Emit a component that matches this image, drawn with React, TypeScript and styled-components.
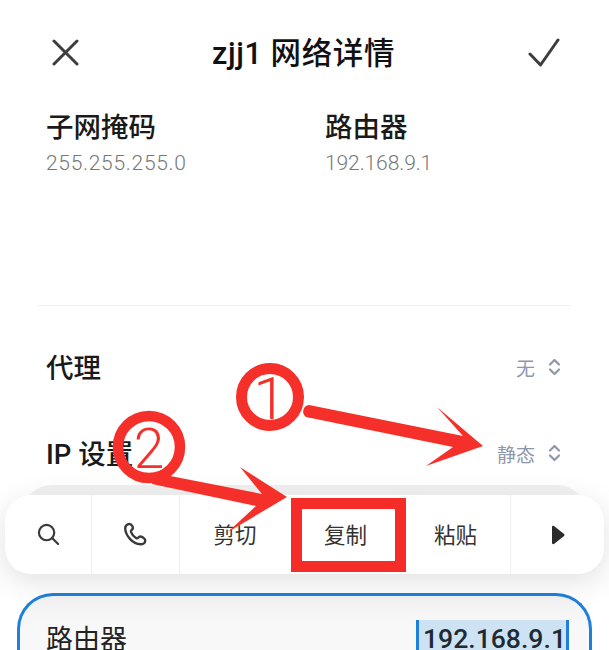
import React from 'react'
import styled, { createGlobalStyle } from 'styled-components'

const Global = createGlobalStyle`
  html, body {
    margin: 0;
    background: #fff;
    font-family: "Roboto", "Noto Sans CJK SC", sans-serif;
  }
`

const Page = styled.div`
  position: relative;
  width: 609px;
  height: 650px;
  overflow: hidden;
  background: #fff;
  display: flex;
  flex-direction: column;
`

const Header = styled.header`
  height: 104px;
  flex: none;
  padding: 0 49px 0 52px;
  display: flex;
  align-items: center;
  justify-content: space-between;
  box-sizing: border-box;
  color: #3d3d3d;
`

const Title = styled.h1`
  margin: -3px 0 0;
  font-size: 30.5px;
  font-weight: 500;
  color: #111;
  letter-spacing: 0.6px;
`

const InfoGrid = styled.div`
  height: 202px;
  flex: none;
  margin: 0 38px;
  padding: 5px 8px 0;
  box-sizing: border-box;
  display: grid;
  grid-template-columns: 279px 1fr;
  align-content: start;
  border-bottom: 1px solid #eeeeee;
`

const Label = styled.div`
  font-size: 27.5px;
  line-height: 38px;
  font-weight: 500;
  color: #1a1a1a;
`

const Value = styled.div<{ $spacing: number }>`
  font-size: 21px;
  line-height: 32px;
  font-weight: 300;
  color: #777;
  letter-spacing: ${p => p.$spacing}px;
`

const Rows = styled.div`
  padding-top: 20px;
  flex: none;
`

const Row = styled.div`
  height: 86px;
  padding: 0 48px 0 46px;
  display: flex;
  align-items: center;
  justify-content: space-between;
`

const RowValue = styled.div`
  display: flex;
  align-items: center;
  gap: 13px;
  margin-top: -4px;
  font-size: 19px;
  color: #8d97aa;
`

const Sheet = styled.div`
  flex: 1;
  margin-top: -13px;
  display: flex;
  flex-direction: column;
  justify-content: flex-end;
`

const GreyBand = styled.div`
  height: 108px;
  flex: none;
  margin: 0 22px;
  border-radius: 30px 30px 0 0;
  background: linear-gradient(#efefef, #f3f3f3 10%, #ffffff 12%);
`

const FieldCard = styled.div`
  flex: 1;
  margin: 0 17px;
  padding: 24px 20px 0 26px;
  border: 3px solid #1e7fdc;
  border-bottom: 0;
  border-radius: 36px 36px 0 0;
  background: linear-gradient(#f2f2f2, #f8f8f8 50%);
  display: flex;
  justify-content: space-between;
  align-items: flex-start;
`

const FieldLabel = styled.span`
  font-size: 27px;
  line-height: 40px;
  color: #222;
`

const FieldValue = styled.span`
  padding: 0 0 0 4px;
  font-size: 26.6px;
  line-height: 38px;
  font-weight: 500;
  color: #1f2a33;
  background: #cde3f3;
  border-left: 3px solid #1e7fdc;
  border-right: 3px solid #1e7fdc;
`

const Menu = styled.div`
  position: absolute;
  left: 5px;
  top: 495px;
  width: 599px;
  height: 79px;
  border-radius: 26px;
  background: #fff;
  box-shadow: 0 8px 30px rgba(0, 0, 0, 0.12);
  display: grid;
  grid-template-columns: 87px 88px 1fr 94px;
  overflow: hidden;
`

const MenuItem = styled.div<{ $divider?: boolean }>`
  display: flex;
  align-items: center;
  justify-content: center;
  color: #333;
  border-right: ${p => (p.$divider ? '1px solid #efefef' : '0')};
`

const TextItems = styled.div`
  display: grid;
  grid-template-columns: 110px 111px 109px;
  border-right: 1px solid #efefef;
`

const MenuText = styled.div`
  display: flex;
  align-items: center;
  justify-content: center;
  padding-bottom: 3px;
  font-size: 21.5px;
  color: #333;
`

const Overlay = styled.svg`
  position: absolute;
  left: 0;
  top: 0;
  width: 609px;
  height: 650px;
  pointer-events: none;
`

const Marker = styled.text`
  font-family: "Roboto", sans-serif;
  font-weight: 300;
  fill: #f5302a;
`

const Chevrons = () => (
  <svg width="13" height="18" viewBox="0 0 13 18" fill="none" stroke="#8d97aa" strokeWidth="2.2" strokeLinecap="round" strokeLinejoin="round">
    <path d="M2 6.500l4.500-4.500 4.500 4.500M2 11.500l4.500 4.500 4.500-4.500" />
  </svg>
)

const App = () => (
  <Page>
    <Global />
    <Header>
      <svg width="27" height="27" viewBox="0 0 27 27" fill="none" stroke="#3d3d3d" strokeWidth="3" strokeLinecap="round">
        <path d="M2 2l23 23M25 2L2 25" />
      </svg>
      <Title>zjj1 网络详情</Title>
      <svg width="32" height="29" viewBox="0 0 32 29" fill="none" stroke="#3d3d3d" strokeWidth="3" strokeLinecap="round" strokeLinejoin="round">
        <path d="M2 16l10.500 11L30 2" />
      </svg>
    </Header>
    <InfoGrid>
      <div>
        <Label>子网掩码</Label>
        <Value $spacing={0.7}>255.255.255.0</Value>
      </div>
      <div>
        <Label>路由器</Label>
        <Value $spacing={-0.1}>192.168.9.1</Value>
      </div>
    </InfoGrid>
    <Rows>
      <Row>
        <Label>代理</Label>
        <RowValue>无<Chevrons /></RowValue>
      </Row>
      <Row>
        <Label>IP 设置</Label>
        <RowValue>静态<Chevrons /></RowValue>
      </Row>
    </Rows>
    <Sheet>
      <GreyBand />
      <FieldCard>
        <FieldLabel>路由器</FieldLabel>
        <FieldValue>192.168.9.1</FieldValue>
      </FieldCard>
    </Sheet>
    <Menu>
      <MenuItem $divider>
        <svg width="23" height="23" viewBox="0 0 24 24" fill="none" stroke="#3a3a3a" strokeWidth="2.300" strokeLinecap="round">
          <circle cx="10" cy="10" r="8" />
          <path d="M16 16l6 6" />
        </svg>
      </MenuItem>
      <MenuItem $divider>
        <svg width="25" height="25" viewBox="0 0 23 23" fill="none" stroke="#3a3a3a" strokeWidth="2.200" strokeLinejoin="round">
          <path d="M5 2C3 2.500 2 4 2 6c.5 7 7 14 14 14.500 2.500 0 4.500-1.500 4.500-3.500 0-1.500-1-2-2.500-3-1.500-1-3-1-4 .5-.5.5-1 .7-1.700.5C10 13.500 8 11 7.300 9 7 8 7.700 7.500 8.300 7c1-1 1-2 .3-3.300C7.800 2.300 6.500 1.600 5 2z" />
        </svg>
      </MenuItem>
      <TextItems>
        <MenuText>剪切</MenuText>
        <MenuText>复制</MenuText>
        <MenuText>粘贴</MenuText>
      </TextItems>
      <MenuItem>
        <svg width="14" height="20" viewBox="0 0 14 20" fill="#2b2b2b">
          <path d="M1 2c0-1 1-1.500 2-1l10 8c.7.5.7 1.500 0 2L3 19c-1 .5-2 0-2-1z" />
        </svg>
      </MenuItem>
    </Menu>
    <Overlay viewBox="0 0 609 650">
      <circle cx="270" cy="397" r="28.500" fill="none" stroke="#f5302a" strokeWidth="11" />
      <Marker x="270" y="419" fontSize="60" textAnchor="middle">1</Marker>
      <path fill="#f5302a" d="M309 405L463 436L437 407L483 446L426 466L453 447L306 417C301 414 303 405 309 405z" />
      <circle cx="149" cy="447" r="31" fill="none" stroke="#f5302a" strokeWidth="10.500" />
      <Marker x="149" y="468" fontSize="55" textAnchor="middle">2</Marker>
      <path fill="#f5302a" d="M155 473L262 494L240 467L287 497L228 532L256 506L152 484z" />
      <rect x="296.500" y="503.500" width="104" height="63" fill="none" stroke="#f52c27" strokeWidth="11" />
    </Overlay>
  </Page>
)

export default App
